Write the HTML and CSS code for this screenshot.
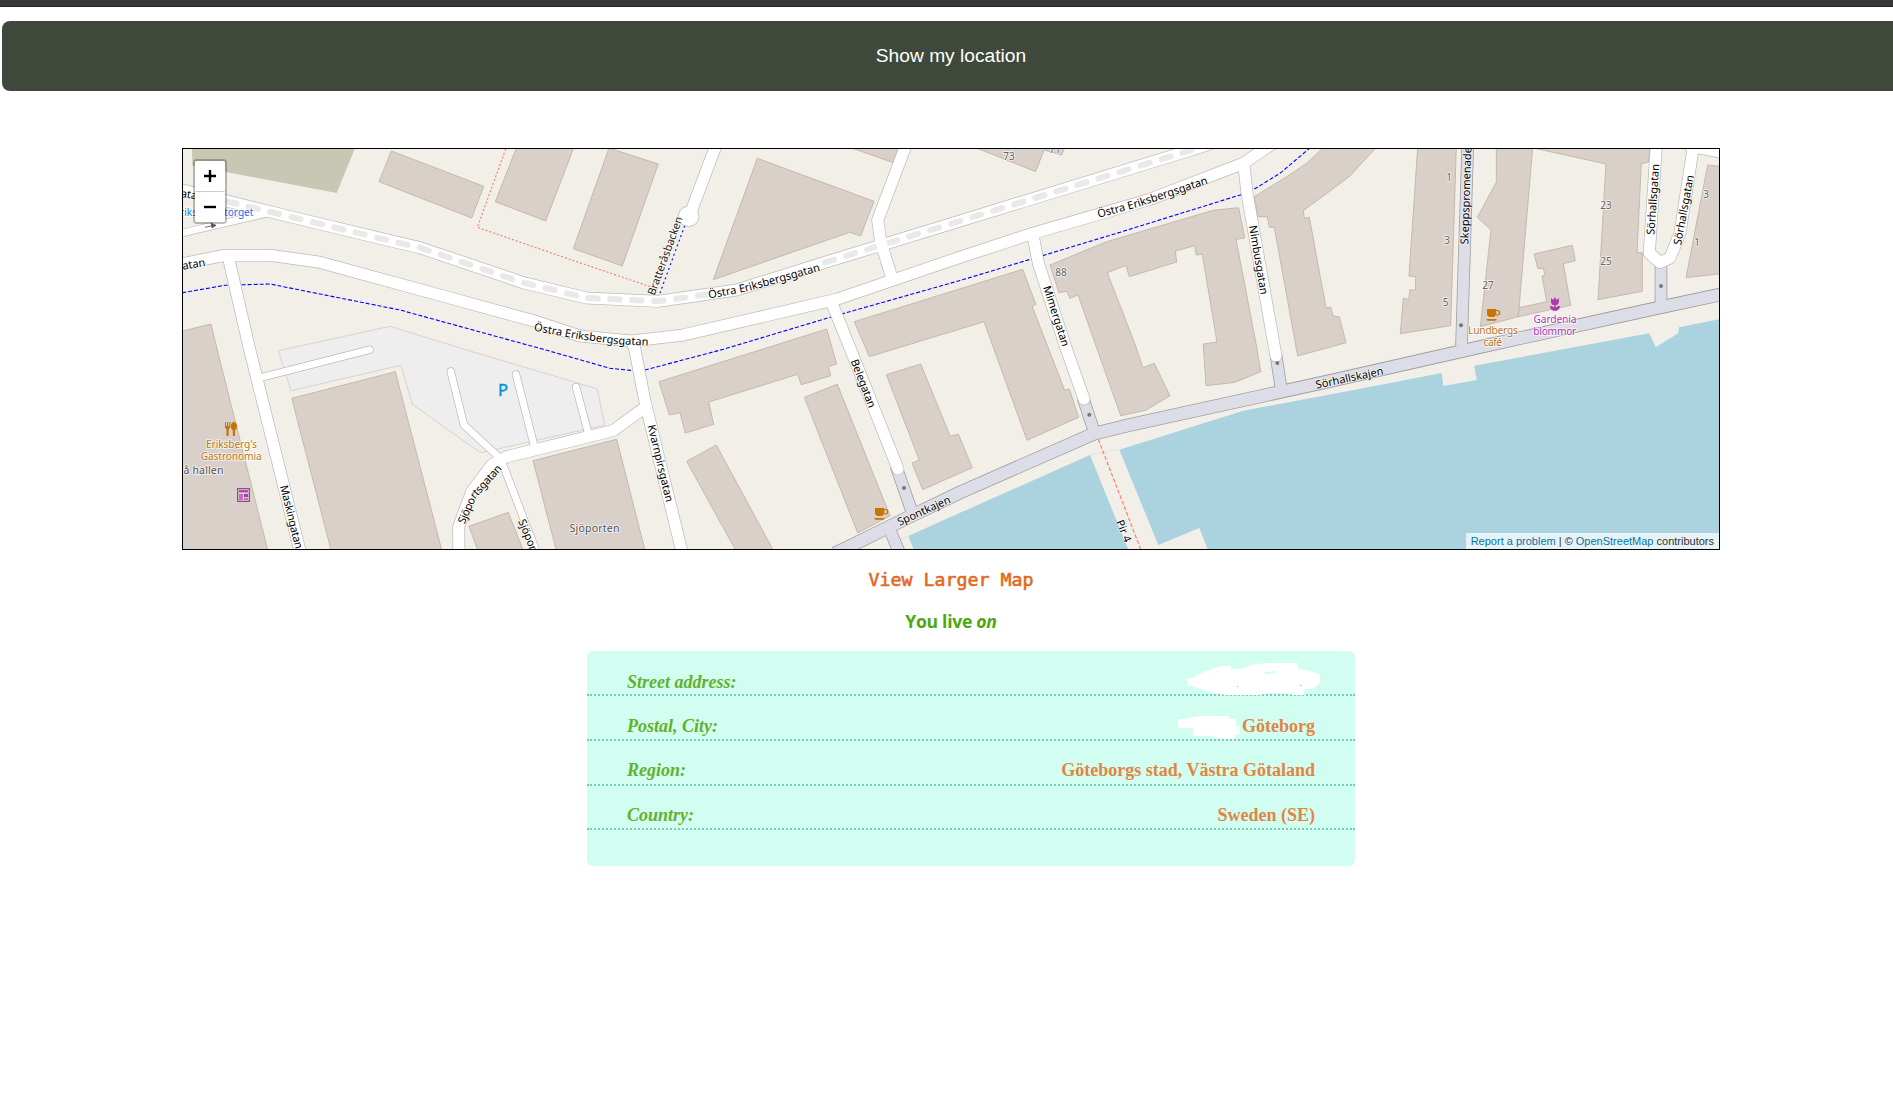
FILE: index.html
```html
<!DOCTYPE html>
<html lang="en">
<head>
<meta charset="utf-8">
<title>Show my location</title>
<link rel="stylesheet" href="styles.css">
</head>
<body>
<div class="topbar"></div>
<button class="locate" type="button">Show my location</button>
<main class="content">
  <div class="map">
    <svg class="tiles" viewBox="183 149 1536 400" width="1536" height="400">
      <defs>
        <g id="quay">
          <path d="M835 553.5L845 548.7L910 516.5L960 492.5L1093.3 434L1126.7 425.7L1280 392L1330 381L1480 347L1655 308.5L1725 293.5"/>
        </g>
        <g id="streets">
          <path d="M176 188.5L231.7 202.2L295.7 218L381.7 238.7L420 247.7L523.3 282.7L586.7 298L658.3 301.3L736.7 290L829.3 261L960 221L1186.7 151.3L1210 144"/>
          <path d="M176 265L225 255.3L270 255.3L320 262.3L446.7 297L536.7 321.7L580 336L631.7 341L681.7 335.3L836.7 299.3L960 257.3L1033 233.3L1150 199.3L1243 163.5L1275 142"/>
          <path d="M228.3 257L249.3 348L261 395L301 555"/>
          <path d="M646 406.7L613.3 430.5L560 443.7L506.7 456.7L491.7 465L471.7 491.7L458.7 526.7L458.9 555"/>
          <path d="M632 341L635 350L645 401.7L683 556"/>
          <path d="M831 301L850 348L898 469"/>
          <path d="M1033 235L1038.3 263L1065 345L1084 399"/>
          <path d="M1244 166L1247 193L1276 356"/>
          <path d="M718 140L691.7 210M688.7 216.2L688.7 216.3"/>
          <path d="M908 140L877.7 220L880.7 242L891 275"/>
          <path d="M1656.7 140L1649.3 253L1660 262.5L1670 258L1680 233L1693 149L1693 140M1690 146L1725 153"/>
        </g>
        <g id="lanes">
          <path d="M176 234.5L270 212.5"/>
          <path d="M260 377.7L369.5 349.7"/>
          <path d="M450.7 371.5L464 425L500 458.3L505 470L538 556"/>
          <path d="M516 374.5L534 445M576 387L588.5 434"/>
        </g>
        <path id="l1" d="M709 298.5L747 291.5L823 270"/>
        <path id="l2" d="M533.5 330.5L577 339L615 344L655 346"/>
        <path id="l3" d="M1098.5 217.8L1136.7 207.5L1212 182.5"/>
        <path id="l4" d="M464.5 524.5L476 498L505 466"/>
      </defs>
      <rect class="land" x="183" y="149" width="1536" height="400"/>
      <path class="green" d="M192 147H355.5L336.7 193L192.3 165.5Z"/>
      <g class="water">
        <path d="M1119.3 449.7L1243.3 410.7L1350 390.7L1441.7 373L1443.3 386L1476.7 380L1474.3 365.7L1649.3 333.3L1655.7 347.3L1678.3 333.3L1679 327.3L1720 319V550H1208L1199.3 528L1158.3 545Z"/>
        <path d="M908.3 536L950 517.3L1090 455L1128.5 550H914Z"/>
        <path d="M900 540L908 536M1090 454.5L1119 449.5" stroke="#aad3df" stroke-opacity=".45" stroke-width=".7"/>
      </g>
      <path class="parking" d="M278.3 350.7L390 326.3L466.7 350L570 380.7L597.3 389L604.7 425.3L560 435L483.3 452.3H480L412.3 404.3L401 365.3L291 390.7Z"/>
      <g class="buildings">
        <path d="M391.3 151L483.7 186.3L471.7 218L379 181.7Z"/>
        <path d="M516.7 147H574L545.7 221L495.3 201.7Z"/>
        <path d="M609 148L658.3 164L622.3 266L573.3 248.7Z"/>
        <path d="M757.3 158.3L874 201.3L860.7 236L849.7 232.3L713.3 279.7Z"/>
        <path d="M849 147L893.3 162.7L899 147Z"/>
        <path d="M974 147L1035.7 171.7L1044 150L1061.7 155L1065 147Z"/>
        <path d="M180 331.6L211 324L217.3 350L268 551H180Z"/>
        <path d="M291.7 398.3L395.3 371.7L442 551H331.3Z"/>
        <path d="M469 526.3L508.3 512.3L523.5 551H478Z"/>
        <path d="M533 460.7L616.7 439.3L645.2 551H556.5Z"/>
        <path d="M659 381.7L826.7 329L836.7 364L828.3 366.7L830.7 375.7L801.3 384.7L797.7 374.3L708.7 402L713.7 424.3L685.3 433L680 412.7L669.3 415Z"/>
        <path d="M686.7 461.3L716.3 445L773.7 551H736Z"/>
        <path d="M804.3 397.3L837.3 384.3L890 515.7L857.7 533Z"/>
        <path d="M886.3 374.7L920.7 364L950.3 436.3L958.3 434L972.3 467.7L922.7 489.7L912 463L919.3 460Z"/>
        <path d="M854.3 321.7L1022.7 269.3L1036 304.7L1032 306L1064.7 390.3L1069.3 389L1078.7 417.3L1027 440.3L984 321.7L869.3 356.7Z"/>
        <path d="M1050 265L1106.7 241.7L1213.3 210.3L1238.7 207.7L1244.7 238L1236 239.3L1256.3 345L1260.7 371.7L1235 382.3L1206 385.7L1203.3 344L1217 342L1202.3 254.3L1196.3 255L1194.7 245.7L1175.3 251L1176.7 262L1129.3 276.7L1126 265.3L1107.3 272.7L1135.3 345L1143 367.7L1154.3 363.3L1170 395.7L1145.7 410.3L1120.7 415.7L1078 295L1070 298.3L1066.7 291.3L1059 292.7Z"/>
        <path d="M1254.3 196.7L1286.7 176.7L1306.7 163.3L1324 147H1376.5L1350 176L1330 191L1303.3 210.7L1304.3 218.3L1309.3 217.3L1326 307.7L1330.7 307.3L1333.3 316L1339.3 316.7L1346 342.7L1297.7 356L1274.3 227.3L1269.3 227.3L1267.3 216.7H1258Z"/>
        <path d="M1417.7 147H1456.3L1450.7 325.7L1400.3 333.7L1403.3 298.3L1408.7 299.7L1410 289.7L1415.3 290.3L1415.7 276.7L1409 276Z"/>
        <path d="M1496.3 147H1532.7L1518.3 316.7L1480.3 326.7L1491 230L1477.3 217.3L1496.3 182.3Z"/>
        <path d="M1534 254L1572.3 245.3L1575.3 260.7L1563.3 263.7L1570.7 305.3L1518.3 316.7L1519 307.7L1546.7 301.7L1542 276L1545 275L1543.3 268.3L1538 268.7Z"/>
        <path d="M1529 147L1606 164L1598 299.7L1642.3 291.3V252.7H1637L1641.3 163.7L1648.7 162L1650 147Z"/>
        <path d="M1707.7 165L1721 166.5V273.7L1686 277.7Z"/>
      </g>
      <use href="#quay" class="quay-edge"/>
      <g class="quay-edge thin"><path d="M889 528L900 554M896 466L912 512M1083 398L1095 434M1276 355L1281 388M1467.9 140L1461.5 346M1661 262V305"/></g>
      <g class="quay-fill">
        <path d="M835 553.5L845 548.7L910 516.5L960 492.5L1093.3 434L1126.7 425.7L1280 392L1330 381L1480 347L1655 308.5L1725 293.5"/>
        <path d="M889 528L900 554M896 466L912 512M1083 398L1095 434M1276 355L1281 388M1467.9 140L1461.5 346M1661 262V305"/>
      </g>
      <g class="walk">
        <path class="foot" d="M505.7 149L477.3 227.3L560 256L657 289"/>
        <path class="pier" d="M1098.3 439.3L1141 550"/>
        <path class="cycle" d="M182.3 292.7L225 285.3L270 284L400 310L543.3 349.3L610 368.3L640 371.3L723.3 349.3L830 317.3L960 280.5L1116.7 233.3L1240 195L1251.7 190.7L1280 173.3L1309 148.8"/>
        <path class="cycle short" d="M684.7 225.7L660 293"/>
      </g>
      <use href="#streets" class="street-edge"/>
      <circle cx="688.7" cy="216.3" r="10.6" fill="#bbb"/>
      <use href="#lanes" class="lane-edge"/>
      <use href="#streets" class="street-fill"/>
      <circle cx="688.7" cy="216.3" r="9.9" fill="#fff"/>
      <use href="#lanes" class="lane-fill"/>
      <g class="tram">
        <path d="M227.3 201.4L231.7 202.5L295.7 218L381.7 238.7L420 247.7L523.3 282.7L586.7 298L658.3 301.3L710 294"/>
        <path d="M825 262.4L960 221L1200 147.3"/>
      </g>
      <path d="M880 238L883.3 250" stroke="#fff" stroke-width="10.8"/>
      <g class="dots"><circle cx="904" cy="488" r="2"/><circle cx="1089.3" cy="414.7" r="2"/><circle cx="1277.3" cy="363" r="2"/><circle cx="1461" cy="325.3" r="2"/><circle cx="1661" cy="286" r="2"/></g>
      <path d="M205 227.3L214 225.5M211 223.2L216 225.3L212 227.8Z" fill="#555" stroke="#555" stroke-width=".8"/>

      <g class="names">
        <text textLength="115"><textPath href="#l1">Östra Eriksbergsgatan</textPath></text>
        <text textLength="116"><textPath href="#l2">Östra Eriksbergsgatan</textPath></text>
        <text textLength="115"><textPath href="#l3">Östra Eriksbergsgatan</textPath></text>
        <text textLength="68"><textPath href="#l4">Sjöportsgatan</textPath></text>
        <text class="path-name" transform="translate(654.5 296) rotate(-70)" textLength="83">Bratteråsbacken</text>
        <text transform="translate(850.6 361) rotate(69)" textLength="51">Belegatan</text>
        <text transform="translate(647.6 425.7) rotate(76.5)" textLength="79">Kvarnpirsgatan</text>
        <text transform="translate(280 486.3) rotate(76.2)" textLength="65">Maskingatan</text>
        <text transform="translate(518 521) rotate(68)" textLength="71">Sjöportsgatan</text>
        <text transform="translate(1043 287.3) rotate(72)" textLength="63">Mimergatan</text>
        <text transform="translate(1249 226) rotate(80.5)" textLength="70">Nimbusgatan</text>
        <text transform="translate(1468.3 244.5) rotate(-88.2)" textLength="104">Skeppspromenaden</text>
        <text transform="translate(1654.3 235) rotate(-86)" textLength="71">Sörhallsgatan</text>
        <text transform="translate(1681 245.5) rotate(-79.5)" textLength="71">Sörhallsgatan</text>
        <text transform="translate(1316.5 388.8) rotate(-12)" textLength="69">Sörhallskajen</text>
        <text transform="translate(899.5 526) rotate(-24.5)" textLength="57">Spontkajen</text>
        <text transform="translate(1116 521.7) rotate(68)" textLength="23">Pir 4</text>
        <text transform="translate(183 269.8) rotate(-10)">atan</text>
        <text transform="translate(180.5 197) rotate(8)">atan</text>
      </g>
      <g class="numbers">
        <text x="1009" y="160">73</text><text x="1055" y="153">71</text><text x="1061" y="276">88</text>
        <text x="1449" y="181">1</text><text x="1447" y="244">3</text><text x="1445.5" y="306">5</text>
        <text x="1488" y="288.5">27</text><text x="1606" y="209">23</text><text x="1606" y="265">25</text>
        <text x="1706" y="197.5">3</text><text x="1697" y="246">1</text>
      </g>
      <g class="places">
        <text class="stop" x="253.5" y="215.6" text-anchor="end" textLength="79">Eriksbergstorget</text>
        <text x="183.5" y="474" textLength="40" class="grey">å hallen</text>
        <text x="569.5" y="532" textLength="50" class="grey">Sjöporten</text>
        <g class="food">
          <text x="206" y="448" textLength="51">Eriksberg's</text><text x="200.7" y="460" textLength="61">Gastronomia</text>
          <text x="1468" y="333.8" textLength="50">Lundbergs</text><text x="1483.5" y="345.5" textLength="18.5">café</text>
        </g>
        <g class="shop"><text x="1533.5" y="323.3" textLength="43">Gardenia</text><text x="1533.3" y="335.3" textLength="43">blommor</text></g>
      </g>
      <text class="p" x="498" y="396">P</text>
      <g class="food">
        <path d="M225 422h1v4h1v-4h1.2v4h1v-4h1v5.5l-1.5 1.8V436h-2.2v-6.7L225 427.5ZM233.9 422c1.9 0 3.1 1.9 3.1 4.2 0 2-.8 3.4-2 3.9V436h-2.2v-5.900c-1.200-.5-2-1.900-2-3.900 0-2.300 1.200-4.200 3.100-4.200Z"/>
        <g id="cup"><path d="M875 508h9v1h1.500a2.800 2.800 0 0 1 0 5.600h-2l-1.500 1.400h-5l-2-2ZM884.300 510v3.400h1a1.700 1.700 0 0 0 0-3.400Z" fill-rule="evenodd"/><path d="M874 518h11l-1.500 1.800h-8Z"/></g>
        <use href="#cup" x="612" y="-199"/>
      </g>
      <g fill="#ac39ac">
        <path d="M237 488h13v14h-13ZM238.200 489.200v11.600h10.600v-11.600Z" fill-rule="evenodd"/>
        <path d="M239 490.200h9v2h-9ZM244 494h4v3h-4Z"/><path d="M239 494h4v6h-4ZM244 498h4v2h-4Z" opacity=".6"/>
        <path d="M1551 298l2.300 2 1.600-3 1.700 3 2.300-2v4.500q-.6 2.500-3.300 2.700v2.300q2.200-2 4.700-1.500-.8 3.700-3.500 4.800h-3.700q-2.800-1.100-3.500-4.800 2.500-.5 4.700 1.500v-2.300q-2.700-.2-3.300-2.700Z"/>
      </g>
    </svg>
    <div class="zoom">
      <button type="button" aria-label="Zoom in"><svg width="12" height="12"><path d="M0 6H12M6 0V12"/></svg></button>
      <button type="button" aria-label="Zoom out"><svg width="12" height="12"><path d="M0 6H12"/></svg></button>
    </div>
    <div class="credit"><a>Report a problem</a> | © <a>OpenStreetMap</a> contributors</div>
  </div>
  <a class="larger">View Larger Map</a>
  <h2 class="title">You live <em>on</em></h2>
</main>
<dl class="address">
  <div class="row"><dt>Street address:</dt><dd></dd></div>
  <div class="row"><dt>Postal, City:</dt><dd>Göteborg</dd></div>
  <div class="row"><dt>Region:</dt><dd>Göteborgs stad, Västra Götaland</dd></div>
  <div class="row"><dt>Country:</dt><dd>Sweden (SE)</dd></div>
  <svg class="redact" viewBox="651 336 432 234" width="144" height="78">
    <path d="M681 384H699L715 373L745 360L786 348H813V357H840L865 348L892 342L925 339H1014V357L1050 363L1080 373V398L1062 415L1032 418V435H1003L975 430H922L896 435H798L765 429L732 421L696 408H681Z"/>
    <path d="M654 507H673L694 502L724 498H807V507H828V528H840V552H825V567H792L765 561L745 556L735 558H699V537L690 534H654Z"/>
    <path class="gap" d="M915 366L932 365L950 362V367L932 372H915Z"/>
    <path class="speck" d="M831 408h3v3h-3ZM1020 405h3v3h-3Z"/>
  </svg>
</dl>
</body>
</html>
```
FILE: styles.css
```css
* { box-sizing: border-box; }
body { margin: 0; height: 1098px; overflow: hidden; background: #fff; }
.topbar { height: 7px; background: #37363b; border-bottom: 1px solid #252328; }
.locate { display: block; width: 1898px; height: 70px; margin: 14px 0 0 2px; padding: 0; border: 0; border-radius: 8px; background: #3e483b; color: #fff; font: 19.2px "Liberation Sans", Arial, sans-serif; }
.content { display: flex; flex-direction: column; align-items: center; width: 1538px; margin: 57px 0 0 182px; }
.map { position: relative; width: 1538px; height: 402px; border: 1px solid #000; overflow: hidden; }
.tiles { display: block; fill: none; }
.land { fill: #f2efe9; }
.green { fill: #c8c7b3; }
.water { fill: #aad3df; }
.parking { fill: #eee; stroke: #d9c6c4; stroke-width: .8; }
.buildings { fill: #d9d0c9; stroke: #c3b3a7; stroke-width: .9; }
.quay-edge { stroke: #a0a0a0; stroke-width: 13.6; }
.quay-edge.thin { stroke-width: 12.6; }
.quay-fill { stroke: #dddde8; stroke-width: 12; }
.quay-fill path + path { stroke-width: 11; }
.street-edge { stroke: #bbb; stroke-width: 12.6; stroke-linecap: round; stroke-linejoin: round; }
.street-fill { stroke: #fff; stroke-width: 11.2; stroke-linecap: round; stroke-linejoin: round; }
.lane-edge { stroke: #bbb; stroke-width: 8.2; stroke-linecap: round; stroke-linejoin: round; }
.lane-fill { stroke: #fff; stroke-width: 6.8; stroke-linecap: round; stroke-linejoin: round; }
.tram { stroke: #e9e9e9; stroke-width: 6; stroke-linecap: round; stroke-dasharray: 9.5 12.5; }
.foot { stroke: #fa8072; stroke-width: 1.2; stroke-dasharray: 2 2; }
.pier { stroke: #fa8072; stroke-width: 1.2; stroke-dasharray: 4 2; }
.cycle { stroke: #00f; stroke-width: 1.1; stroke-dasharray: 4 2; }
.cycle.short { stroke-dasharray: 2 3; }
.dots { fill: #777; }
.names text, .numbers text, .places text { font: 11px "Noto Sans", sans-serif; paint-order: stroke; stroke-linejoin: round; }
.names { fill: #000; stroke: rgba(255, 255, 255, .75); stroke-width: 1.5; }
.names .path-name { fill: #222; }
.numbers { fill: #666; stroke: rgba(255, 255, 255, .6); stroke-width: 2; text-anchor: middle; }
.numbers text { font-size: 10px; }
.places { stroke: rgba(255, 255, 255, .6); stroke-width: 2; }
.places text { font-size: 10.2px; }
.places .grey { fill: #555; font-size: 10.6px; }
.stop { fill: #1a73e8; }
.food { fill: #c77400; }
.places .food { fill: #b9781f; }
.shop { fill: #ac39ac; }
.p { fill: #0092da; font: 400 16.5px "Noto Sans", sans-serif; stroke: #0092da; stroke-width: .4; }
.zoom { position: absolute; left: 10px; top: 10px; width: 34px; border: 2px solid rgba(0, 0, 0, .25); border-radius: 4px; background: #fff; background-clip: padding-box; }
.zoom button { display: flex; align-items: center; justify-content: center; width: 30px; height: 30px; padding: 0; border: 0; border-radius: 2px; background: #fff; }
.zoom button:first-child { height: 31px; border-bottom: 1px solid #ccc; }
.zoom path { stroke: #000; stroke-width: 2.4px; }
.credit { position: absolute; right: 0; bottom: 0; height: 16px; padding: 0 5px; background: rgba(255, 255, 255, .7); color: #333; font: 11px/16px "Liberation Sans", Arial, sans-serif; white-space: nowrap; }
.credit a { color: #0078a8; }
.larger { margin-top: 18px; color: #e16a21; font: 18.27px/24px "DejaVu Sans Mono", monospace; -webkit-text-stroke: .6px #e16a21; }
.title { margin: 17px 0 0; color: #4ca80f; font: 700 17.6px/24px "Open Sans", sans-serif; letter-spacing: -.3px; }
.address { position: relative; width: 768px; height: 215px; margin: 18px 0 0 587px; border-radius: 6px; background: #d2fef1; font: bold 18px/20px "Liberation Serif", "Times New Roman", serif; }
.row { display: flex; justify-content: space-between; height: 45px; padding: 20px 40px 0; border-bottom: 2px dotted #78cdb9; }
.row:first-child { padding-top: 21px; }
.row:nth-child(3) { padding-top: 19px; }
.row:nth-child(4) { height: 44px; padding-top: 19px; }
.row dt { color: #62b12c; font-style: italic; }
.row dd { margin: 0; color: #e18542; }
.redact { position: absolute; left: 590px; top: 11px; fill: #fff; }
.redact .gap { fill: #d2fef1; }
.redact .speck { fill: #e0a030; }
```
